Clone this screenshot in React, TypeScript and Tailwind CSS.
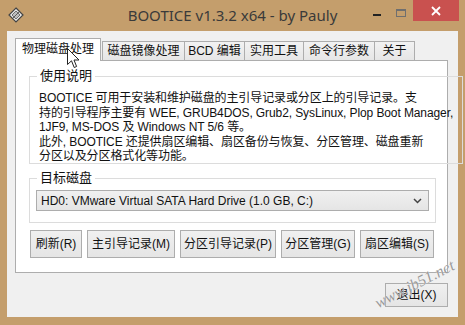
import React from "react";

const FONT = { fontFamily: '"Liberation Sans", "Noto Sans CJK SC", sans-serif' };

function Btn({ w, children }: { w: string; children: React.ReactNode }) {
  return (
    <div
      className={`${w} h-[28px] flex items-center justify-center border border-[#adadad] bg-gradient-to-b from-[#f0f0f0] to-[#e5e5e5] text-[12px] text-[#111]`}
    >
      {children}
    </div>
  );
}

export default function App() {
  return (
    <div className="relative w-[465px] h-[325px] bg-[#c49e6c] flex flex-col overflow-hidden" style={FONT}>
      {/* Title bar */}
      <div className="h-[31px] flex items-start relative shrink-0">
        <div className="absolute left-[8px] top-[7px] w-[16px] h-[16px]">
          <svg width="16" height="16" viewBox="0 0 16 16">
            <polygon points="8,1 15,8 8,15 1,8" fill="#e8e8e8" stroke="#444" strokeWidth="1.2" />
            <polygon points="8,4 12,8 8,12 4,8" fill="#bdbdbd" stroke="#555" strokeWidth="0.8" />
            <line x1="5" y1="11" x2="11" y2="5" stroke="#444" strokeWidth="0.8" />
          </svg>
        </div>
        <div
          className="w-full text-center pt-[4px] text-[15px] text-[#3a3a3a]"
          style={{ fontFamily: '"Noto Sans", "Open Sans", sans-serif' }}
        >
          BOOTICE v1.3.2 x64 - by Pauly
        </div>
        <div className="absolute left-[373px] top-[14px] w-[8px] h-[2px] bg-[#222]" />
        <div className="absolute left-[396px] top-[9px] w-[10px] h-[8px] border border-[#6f6f6f] border-t-2" />
        <div className="absolute left-[413px] top-0 w-[46px] h-[21px] bg-[#c9514f] flex items-center justify-center">
          <svg width="10" height="10" viewBox="0 0 10 10">
            <path d="M1 1 L9 9 M9 1 L1 9" stroke="#fff" strokeWidth="1.8" />
          </svg>
        </div>
      </div>

      {/* Client area */}
      <div className="mx-[7px] h-[286px] bg-[#f0f0f0] flex flex-col px-[8px] pt-[7px]">
        {/* Tabs */}
        <div className="flex items-end h-[22px] relative z-10 text-[12px] text-[#111]">
          <div className="w-[86px] h-[23px] -mb-px bg-white border border-b-0 border-[#adadad] flex items-center justify-center pb-[2px]">
            物理磁盘处理
          </div>
          <div className="flex items-end h-[19px] ml-[1px]">
            <div className="w-[83px] h-[19px] border border-b-0 border-[#adadad] bg-gradient-to-b from-[#f2f2f2] to-[#e6e6e6] flex items-center justify-center">
              磁盘镜像处理
            </div>
            <div className="w-[60px] h-[19px] border border-b-0 border-l-0 border-[#adadad] bg-gradient-to-b from-[#f2f2f2] to-[#e6e6e6] flex items-center justify-center">
              BCD 编辑
            </div>
            <div className="w-[59px] h-[19px] border border-b-0 border-l-0 border-[#adadad] bg-gradient-to-b from-[#f2f2f2] to-[#e6e6e6] flex items-center justify-center">
              实用工具
            </div>
            <div className="w-[71px] h-[19px] border border-b-0 border-l-0 border-[#adadad] bg-gradient-to-b from-[#f2f2f2] to-[#e6e6e6] flex items-center justify-center">
              命令行参数
            </div>
            <div className="w-[40px] h-[19px] border border-b-0 border-l-0 border-[#adadad] bg-gradient-to-b from-[#f2f2f2] to-[#e6e6e6] flex items-center justify-center">
              关于
            </div>
          </div>
        </div>

        {/* Tab page */}
        <div className="w-[433px] h-[213px] bg-white border border-[#adadad] flex flex-col pl-[13px] pr-[11px] pt-[7px]">
          <fieldset className="border border-[#dcdcdc] h-[96px] px-[9px]">
            <legend className="px-[3px] ml-[-2px] text-[13px] leading-[16px] text-[#111]">使用说明</legend>
            <div className="text-[12px] leading-[14.5px] text-[#111] pt-[7px] tracking-[-0.1px]">
              <div className="whitespace-nowrap">BOOTICE 可用于安装和维护磁盘的主引导记录或分区上的引导记录。支</div>
              <div className="whitespace-nowrap">持的引导程序主要有 WEE, GRUB4DOS, Grub2, SysLinux, Plop Boot Manager,</div>
              <div className="whitespace-nowrap">1JF9, MS-DOS 及 Windows NT 5/6 等。</div>
              <div className="whitespace-nowrap">此外, BOOTICE 还提供扇区编辑、扇区备份与恢复、分区管理、磁盘重新</div>
              <div className="whitespace-nowrap">分区以及分区格式化等功能。</div>
            </div>
          </fieldset>

          <fieldset className="border border-[#dcdcdc] mt-[6px] h-[53px] px-[6px]">
            <legend className="px-[3px] ml-[1px] text-[13px] leading-[16px] text-[#111]">目标磁盘</legend>
            <div className="mt-[4px] h-[21px] border border-[#adadad] bg-gradient-to-b from-[#f0f0f0] to-[#e5e5e5] flex items-center pl-[4px] pr-[6px] text-[12px] text-[#111]">
              <span className="flex-1">HD0: VMware Virtual SATA Hard Drive (1.0 GB, C:)</span>
              <svg width="9" height="6" viewBox="0 0 9 6">
                <path d="M1 1 L4.5 4.5 L8 1" stroke="#444" strokeWidth="1.5" fill="none" />
              </svg>
            </div>
          </fieldset>

          <div className="flex gap-[5px] mt-[7px] ml-[1px]">
            <Btn w="w-[52px]">刷新(R)</Btn>
            <Btn w="w-[88px]">主引导记录(M)</Btn>
            <Btn w="w-[96px]">分区引导记录(P)</Btn>
            <Btn w="w-[74px]">分区管理(G)</Btn>
            <Btn w="w-[74px]">扇区编辑(S)</Btn>
          </div>
        </div>

        <div className="flex justify-end w-[433px] mt-[10px]">
          <div className="w-[63px] h-[24px] flex items-center justify-center border border-[#adadad] bg-gradient-to-b from-[#f0f0f0] to-[#e5e5e5] text-[12px] text-[#111]">
            退出(X)
          </div>
        </div>
      </div>

      {/* Mouse cursor */}
      <div className="absolute z-20 left-[67px] top-[48px]">
        <svg width="13" height="21" viewBox="0 0 13 21">
          <path d="M0.5 0.5 L0.5 16.5 L4.5 12.8 L7.2 19.5 L9.6 18.5 L7 12 L12 12 Z" fill="#fff" stroke="#222" strokeWidth="1" />
        </svg>
      </div>

      {/* Watermark */}
      <div
        className="absolute z-20 left-[376px] top-[292px] -rotate-[27deg] origin-left text-[16px] text-[#9a9a9a] italic"
        style={{ fontFamily: '"Liberation Serif", serif', textShadow: "0 0 1px #fff" }}
      >
        www.jb51.net
      </div>
    </div>
  );
}
